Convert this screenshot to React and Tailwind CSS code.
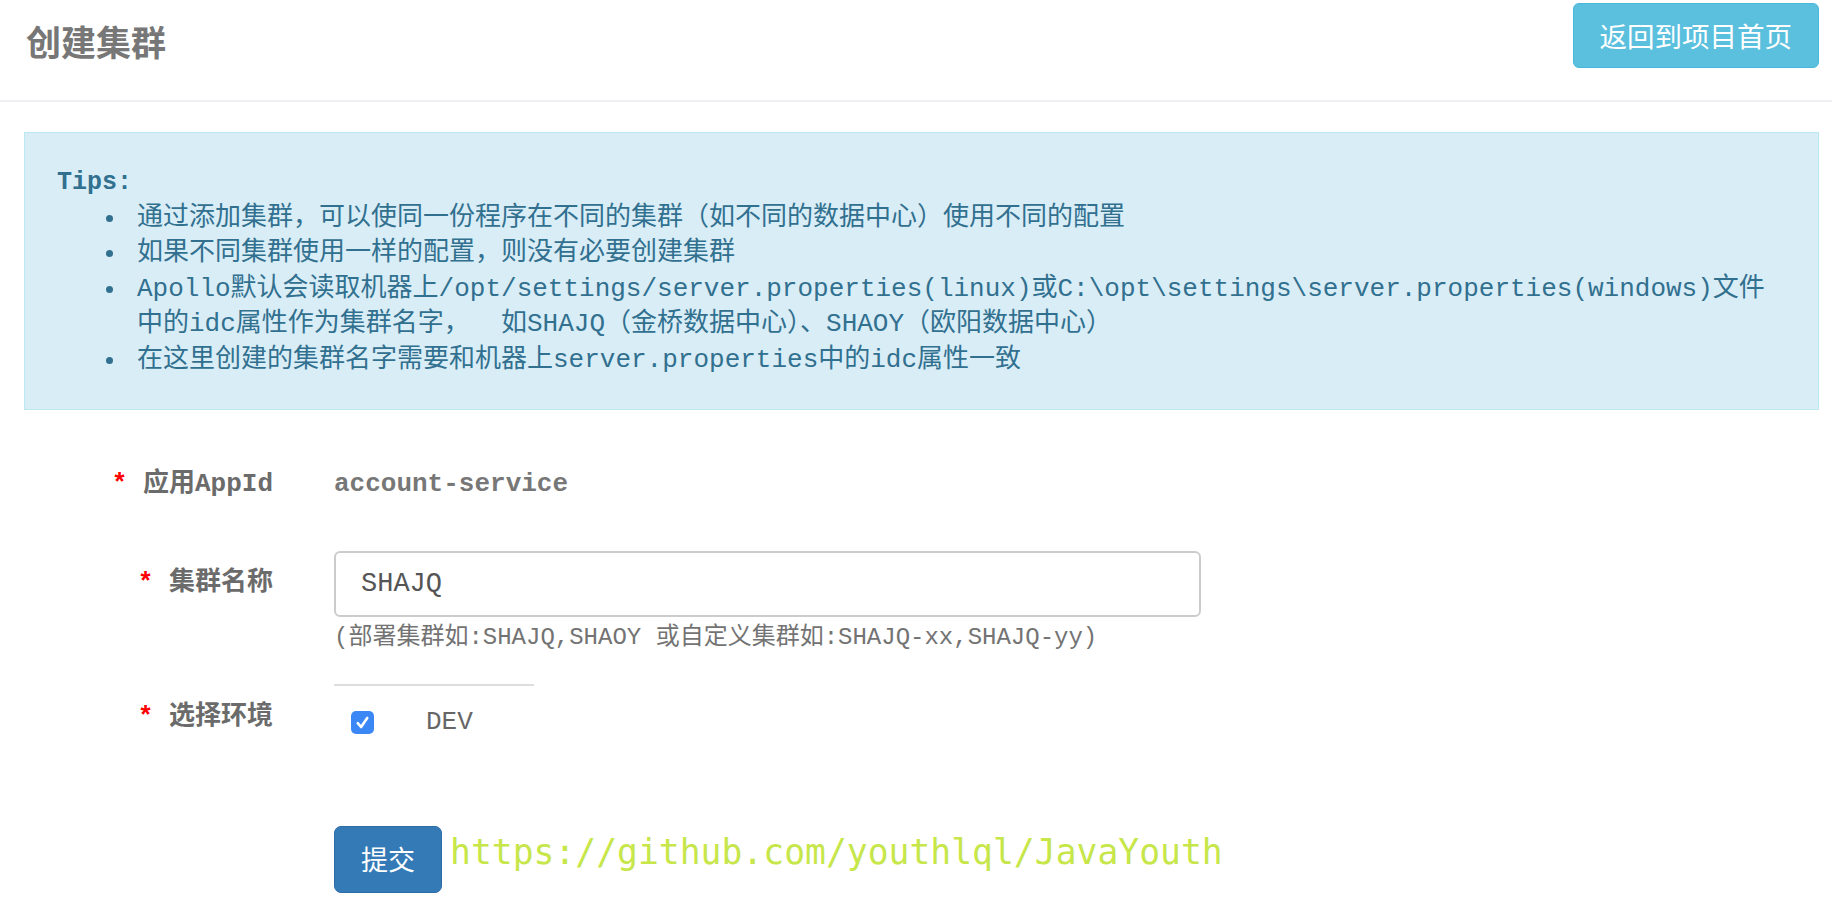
// App.jsx
// Apollo "create cluster" page — header, tips box, form

const mono = "font-['Liberation_Mono','Noto_Sans_CJK_SC',monospace]"

function Label({ text }) {
  // red star + label, right aligned against the value column
  return (
    <div className={"w-[249px] shrink-0 whitespace-pre text-right text-[26px] leading-[36px] font-bold text-[#6b6b6b] " + mono}>
      <span className="text-[#ff0000]">*</span> {text}
    </div>
  )
}

function Bullet({ children }) {
  return (
    <div className="flex">
      <div className="flex w-[80px] shrink-0 justify-end pr-[24px]">
        <div className="mt-[14px] h-[7px] w-[7px] rounded-full bg-[#31708f]" />
      </div>
      <div className="whitespace-pre">{children}</div>
    </div>
  )
}

export default function App() {
  return (
    <div className="min-h-screen bg-white font-['Noto_Sans_CJK_SC',sans-serif]">

      {/* Header */}
      <div className="flex h-[102px] items-start justify-between border-b-2 border-[#eef0f4] pl-[26px] pr-[13px]">
        <h1 className="mt-[23px] text-[35px] leading-[36px] font-bold text-[#777777]">创建集群</h1>
        <button className="mt-[3px] h-[65px] rounded-[6px] border border-[#46b8da] bg-[#5bc0de] px-[26px] text-[27.5px] text-white">
          返回到项目首页
        </button>
      </div>

      <div className="pl-[24px] pr-[13px]">

        {/* Tips */}
        <div className={"mt-[30px] border border-[#bce8f1] bg-[#d9edf7] pl-[32px] pt-[32px] pb-[30px] text-[26px] leading-[35.6px] text-[#31708f] " + mono}>
          <div className="text-[25px] font-bold">Tips:</div>
          <Bullet>通过添加集群，可以使同一份程序在不同的集群（如不同的数据中心）使用不同的配置</Bullet>
          <Bullet>如果不同集群使用一样的配置，则没有必要创建集群</Bullet>
          <Bullet>
            {"Apollo默认会读取机器上/opt/settings/server.properties(linux)或C:\\opt\\settings\\server.properties(windows)文件"}
            {"\n"}
            {"中的idc属性作为集群名字，  如SHAJQ（金桥数据中心）、SHAOY（欧阳数据中心）"}
          </Bullet>
          <Bullet>在这里创建的集群名字需要和机器上server.properties中的idc属性一致</Bullet>
        </div>

        {/* Form */}
        <div className="mt-[56px] flex">
          <Label text="应用AppId" />
          <div className={"ml-[61px] text-[26px] leading-[36px] font-bold text-[#777777] " + mono}>account-service</div>
        </div>

        <div className="mt-[49px] flex">
          <div className="pt-[14px]">
            <Label text="集群名称" />
          </div>
          <div className="ml-[61px] flex flex-col">
            <input
              defaultValue="SHAJQ"
              className={"h-[66px] w-[867px] rounded-[6px] border-2 border-[#cccccc] bg-white px-[25px] text-[27px] text-[#555555] outline-none " + mono}
            />
            <div className={"mt-[4px] text-[24px] leading-[34px] text-[#737373] " + mono}>
              (部署集群如:SHAJQ,SHAOY 或自定义集群如:SHAJQ-xx,SHAJQ-yy)
            </div>
            <div className="mt-[29px] h-[2px] w-[200px] bg-[#dddddd]" />
          </div>
        </div>

        <div className="mt-[13px] flex">
          <Label text="选择环境" />
          <div className="ml-[61px] flex h-[36px] items-center pl-[17px] pt-[12px]">
            <div className="flex h-[23px] w-[23px] items-center justify-center rounded-[5px] bg-[#3b87f6]">
              <svg viewBox="0 0 16 16" className="h-[19px] w-[19px]">
                <path d="M4 8.6 L6.8 11.8 L12 4.2" fill="none" stroke="white" strokeWidth="2.2" strokeLinecap="round" strokeLinejoin="round" />
              </svg>
            </div>
            <span className={"ml-[52px] text-[26px] text-[#666666] " + mono}>DEV</span>
          </div>
        </div>

        <div className="mt-[91px] flex items-start pl-[310px]">
          <button className="h-[67px] w-[108px] rounded-[7px] border border-[#2e6da4] bg-[#337ab7] text-[27px] text-white">
            提交
          </button>
          <span className="ml-[8px] mt-[9px] font-['DejaVu_Sans_Mono',monospace] text-[34.7px] leading-[35px] text-[#c6e64a]">
            https://github.com/youthlql/JavaYouth
          </span>
        </div>
      </div>
    </div>
  )
}
